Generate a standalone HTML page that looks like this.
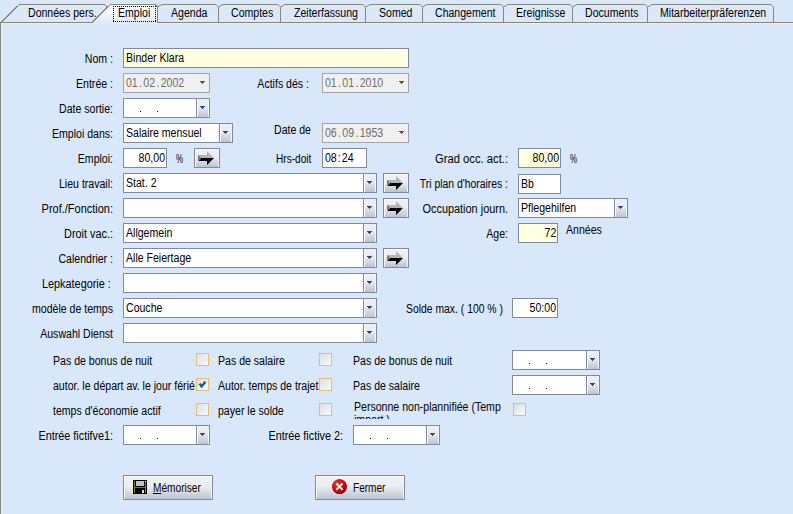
<!DOCTYPE html>
<html><head><meta charset="utf-8"><style>
html,body{margin:0;padding:0;}
body{width:793px;height:514px;overflow:hidden;position:relative;background:#D8E7FA;}
.abs{position:absolute;}
.t{font-family:"Liberation Sans",sans-serif;font-size:12px;line-height:13px;color:#000;white-space:nowrap;transform:scaleX(0.88);transform-origin:0 0;}
.tr{text-align:right;transform-origin:100% 0;}
.box{box-sizing:border-box;border:1px solid #7E8B9C;overflow:hidden;}
.dis{color:#6D6D6D;}
.sp{padding:0 1.5px;}
.sp2{padding:0 1.2px;}
.cbtn{position:absolute;right:0;top:0;bottom:0;width:12px;border-left:1px solid #7E8B9C;background:linear-gradient(#EFF0F5 0%,#E9EBF0 40%,#BEC4D0 100%);box-shadow:inset 1px 0 0 #fafbfd, inset -1px 0 0 #f5f6f9;}
.dot{width:1px;height:1px;background:#3A003A;}
.btn{box-sizing:border-box;border:1px solid #7E8B9C;background:linear-gradient(#F1F1F5 0%,#ECEDF2 45%,#BCC3CF 100%);box-shadow:inset 1px 1px 0 #fbfbfd, inset -1px 0 0 #f3f4f7;}
.chk{box-sizing:border-box;width:13px;height:13px;border:1px solid #E3C070;background:linear-gradient(135deg,#DCDFE5,#F8F9FA);}
</style></head>
<body>
<svg class="abs" style="left:0;top:0" width="793" height="24" viewBox="0 0 793 24"><defs><linearGradient id="selg" x1="0" y1="0" x2="0" y2="1"><stop offset="0" stop-color="#ffffff"/><stop offset="1" stop-color="#dfeaf9"/></linearGradient></defs><path d="M157.5 22 V6.5 L160.5 4.5 H215.5 L218.5 6.5 V22 Z" fill="#DBE8F9"/><path d="M218.5 22 V6.5 L221.5 4.5 H277.5 L280.5 6.5 V22 Z" fill="#DBE8F9"/><path d="M280.5 22 V6.5 L283.5 4.5 H362.5 L365.5 6.5 V22 Z" fill="#DBE8F9"/><path d="M365.5 22 V6.5 L368.5 4.5 H419.5 L422.5 6.5 V22 Z" fill="#DBE8F9"/><path d="M422.5 22 V6.5 L425.5 4.5 H500.5 L503.5 6.5 V22 Z" fill="#DBE8F9"/><path d="M503.5 22 V6.5 L506.5 4.5 H569.5 L572.5 6.5 V22 Z" fill="#DBE8F9"/><path d="M572.5 22 V6.5 L575.5 4.5 H644.5 L647.5 6.5 V22 Z" fill="#DBE8F9"/><path d="M647.5 22 V6.5 L650.5 4.5 H770.5 L773.5 6.5 V22 Z" fill="#DBE8F9"/><path d="M1.5 22 L16 7.5 L20 4.5 H104.5 L107 7 L92 22 Z" fill="#DBE8F9"/><path d="M0 22.5 H92 M157 22.5 H793" stroke="#898577"/><path d="M157.5 22 V7 L162 4.5 H216 L218.5 7 V22" fill="none" stroke="#898577"/><path d="M218.5 22 V7 L223 4.5 H278 L280.5 7 V22" fill="none" stroke="#898577"/><path d="M280.5 22 V7 L285 4.5 H363 L365.5 7 V22" fill="none" stroke="#898577"/><path d="M365.5 22 V7 L370 4.5 H420 L422.5 7 V22" fill="none" stroke="#898577"/><path d="M422.5 22 V7 L427 4.5 H501 L503.5 7 V22" fill="none" stroke="#898577"/><path d="M503.5 22 V7 L508 4.5 H570 L572.5 7 V22" fill="none" stroke="#898577"/><path d="M572.5 22 V7 L577 4.5 H645 L647.5 7 V22" fill="none" stroke="#898577"/><path d="M647.5 22 V7 L652 4.5 H771 L773.5 7 V22" fill="none" stroke="#898577"/><path d="M1 22.5 L15.5 8 L19.5 4.5 H104.5 L107.5 7" fill="none" stroke="#898577" shape-rendering="crispEdges"/><path d="M92 23 L107 8 L110 4.5 H154.5 L157 7 V23 Z" fill="url(#selg)"/><path d="M92 22.5 L107 7.5 L110.5 4.5 H155 L157.5 7 V22" fill="none" stroke="#898577" shape-rendering="crispEdges"/><path d="M113 6h1v1h-1z M113 21h1v1h-1z M115 6h1v1h-1z M115 21h1v1h-1z M117 6h1v1h-1z M117 21h1v1h-1z M119 6h1v1h-1z M119 21h1v1h-1z M121 6h1v1h-1z M121 21h1v1h-1z M123 6h1v1h-1z M123 21h1v1h-1z M125 6h1v1h-1z M125 21h1v1h-1z M127 6h1v1h-1z M127 21h1v1h-1z M129 6h1v1h-1z M129 21h1v1h-1z M131 6h1v1h-1z M131 21h1v1h-1z M133 6h1v1h-1z M133 21h1v1h-1z M135 6h1v1h-1z M135 21h1v1h-1z M137 6h1v1h-1z M137 21h1v1h-1z M139 6h1v1h-1z M139 21h1v1h-1z M141 6h1v1h-1z M141 21h1v1h-1z M143 6h1v1h-1z M143 21h1v1h-1z M145 6h1v1h-1z M145 21h1v1h-1z M147 6h1v1h-1z M147 21h1v1h-1z M149 6h1v1h-1z M149 21h1v1h-1z M151 6h1v1h-1z M151 21h1v1h-1z M153 6h1v1h-1z M153 21h1v1h-1z M155 6h1v1h-1z M155 21h1v1h-1z M113 8h1v1h-1z M155 8h1v1h-1z M113 10h1v1h-1z M155 10h1v1h-1z M113 12h1v1h-1z M155 12h1v1h-1z M113 14h1v1h-1z M155 14h1v1h-1z M113 16h1v1h-1z M155 16h1v1h-1z M113 18h1v1h-1z M155 18h1v1h-1z M113 20h1v1h-1z M155 20h1v1h-1z" fill="#000"/></svg>
<div class="abs" style="left:0;top:22px;width:1px;height:492px;background:#898577"></div>
<div class="abs" style="left:1px;top:23px;width:1px;height:491px;background:#E8F1FC"></div>
<div class="abs" style="left:1px;top:23px;width:792px;height:1px;background:#E4EEFB"></div>
<div class="t abs" style="left:28px;top:7px;">Données pers.</div>
<div class="t abs" style="left:118px;top:7px;">Emploi</div>
<div class="t abs" style="left:171px;top:7px;">Agenda</div>
<div class="t abs" style="left:231px;top:7px;">Comptes</div>
<div class="t abs" style="left:294px;top:7px;">Zeiterfassung</div>
<div class="t abs" style="left:379px;top:7px;">Somed</div>
<div class="t abs" style="left:435px;top:7px;">Changement</div>
<div class="t abs" style="left:516px;top:7px;">Ereignisse</div>
<div class="t abs" style="left:585px;top:7px;">Documents</div>
<div class="t abs" style="left:660px;top:7px;">Mitarbeiterpräferenzen</div>
<div class="t tr abs" style="left:0;width:113px;top:53px;">Nom :</div>
<div class="abs box" style="left:123px;top:48px;width:286px;height:20px;background:#FFFFE1;border-color:#7E8B9C"><div class="t abs" style="left:2px;top:3px">Binder Klara</div></div>
<div class="t tr abs" style="left:0;width:113px;top:78px;">Entrée :</div>
<div class="abs box" style="left:123px;top:73px;width:87px;height:20px;background:#F0F0F0;border-color:#A5A5A5"><div class="t abs dis" style="left:2px;top:3px">01<span class=sp>.</span>02<span class=sp>.</span>2002</div><svg class="abs" style="right:4px;top:7px" width="5" height="3" viewBox="0 0 5 3"><path d="M0 0h5v1h-1v1h-1v1h-1v-1h-1v-1h-1z" fill="#555555"/></svg></div>
<div class="t tr abs" style="left:0;width:309px;top:78px;">Actifs dés :</div>
<div class="abs box" style="left:322px;top:73px;width:87px;height:20px;background:#F0F0F0;border-color:#A5A5A5"><div class="t abs dis" style="left:2px;top:3px">01<span class=sp>.</span>01<span class=sp>.</span>2010</div><svg class="abs" style="right:4px;top:7px" width="5" height="3" viewBox="0 0 5 3"><path d="M0 0h5v1h-1v1h-1v1h-1v-1h-1v-1h-1z" fill="#555555"/></svg></div>
<div class="t tr abs" style="left:0;width:113px;top:103px;">Date sortie:</div>
<div class="abs box" style="left:123px;top:98px;width:87px;height:20px;background:#fff;border-color:#7E8B9C"><div class="abs dot" style="left:16px;top:12px"></div><div class="abs dot" style="left:33px;top:12px"></div><div class="cbtn"><svg class="abs" style="left:3px;top:7px" width="5" height="3" viewBox="0 0 5 3"><path d="M0 0h5v1h-1v1h-1v1h-1v-1h-1v-1h-1z" fill="#2C4A74"/></svg></div></div>
<div class="t tr abs" style="left:0;width:113px;top:128px;">Emploi dans:</div>
<div class="abs box" style="left:123px;top:123px;width:110px;height:20px;background:#fff;border-color:#7E8B9C"><div class="t abs" style="left:2px;top:3px">Salaire mensuel</div><div class="cbtn"><svg class="abs" style="left:3px;top:7px" width="5" height="3" viewBox="0 0 5 3"><path d="M0 0h5v1h-1v1h-1v1h-1v-1h-1v-1h-1z" fill="#2C4A74"/></svg></div></div>
<div class="t abs" style="left:274px;top:124px;">Date de</div>
<div class="abs box" style="left:322px;top:123px;width:87px;height:20px;background:#F0F0F0;border-color:#A5A5A5"><div class="t abs dis" style="left:2px;top:3px">06<span class=sp>.</span>09<span class=sp>.</span>1953</div><svg class="abs" style="right:4px;top:7px" width="5" height="3" viewBox="0 0 5 3"><path d="M0 0h5v1h-1v1h-1v1h-1v-1h-1v-1h-1z" fill="#555555"/></svg></div>
<div class="t tr abs" style="left:0;width:113px;top:153px;">Emploi:</div>
<div class="abs box" style="left:123px;top:148px;width:44px;height:20px;background:#fff;border-color:#7E8B9C"><div class="t tr abs" style="right:1px;top:3px">80,00</div></div>
<div class="t abs" style="left:176px;top:153px;transform:scaleX(0.66);">%</div>
<div class="abs btn" style="left:194px;top:148px;width:26px;height:20px"><svg class="abs" style="left:0;top:0" width="24" height="18" viewBox="0 0 24 18"><path d="M3 6 H12 V2 L19 9 H3 Z" fill="#B4B4B4"/><path d="M3 9 H19 L12 16 V12 H4 Z" fill="#000"/><path d="M3 6 L6 8.5 V10 L3 12 Z" fill="#7a7a7a"/></svg></div>
<div class="t abs" style="left:276px;top:153px;transform:scaleX(0.84);">Hrs-doit</div>
<div class="abs box" style="left:322px;top:148px;width:45px;height:20px;background:#fff;border-color:#7E8B9C"><div class="t abs" style="left:2px;top:3px">08<span class=sp2>:</span>24</div></div>
<div class="t tr abs" style="left:0;width:508px;top:153px;transform:scaleX(0.935);">Grad occ. act.:</div>
<div class="abs box" style="left:518px;top:148px;width:43px;height:20px;background:#FFFFE1;border-color:#7E8B9C"><div class="t tr abs" style="right:1px;top:3px">80,00</div></div>
<div class="t abs" style="left:570px;top:153px;transform:scaleX(0.66);">%</div>
<div class="t tr abs" style="left:0;width:113px;top:178px;">Lieu travail:</div>
<div class="abs box" style="left:123px;top:173px;width:254px;height:20px;background:#fff;border-color:#7E8B9C"><div class="t abs" style="left:2px;top:3px">Stat. 2</div><div class="cbtn"><svg class="abs" style="left:3px;top:7px" width="5" height="3" viewBox="0 0 5 3"><path d="M0 0h5v1h-1v1h-1v1h-1v-1h-1v-1h-1z" fill="#2C4A74"/></svg></div></div>
<div class="abs btn" style="left:383px;top:173px;width:26px;height:20px"><svg class="abs" style="left:0;top:0" width="24" height="18" viewBox="0 0 24 18"><path d="M3 6 H12 V2 L19 9 H3 Z" fill="#B4B4B4"/><path d="M3 9 H19 L12 16 V12 H4 Z" fill="#000"/><path d="M3 6 L6 8.5 V10 L3 12 Z" fill="#7a7a7a"/></svg></div>
<div class="t tr abs" style="left:0;width:508px;top:178px;transform:scaleX(0.866);">Tri plan d'horaires :</div>
<div class="abs box" style="left:518px;top:174px;width:43px;height:20px;background:#fff;border-color:#7E8B9C"><div class="t abs" style="left:2px;top:3px">Bb</div></div>
<div class="t tr abs" style="left:0;width:113px;top:203px;transform:scaleX(0.915);">Prof./Fonction:</div>
<div class="abs box" style="left:123px;top:198px;width:254px;height:20px;background:#fff;border-color:#7E8B9C"><div class="cbtn"><svg class="abs" style="left:3px;top:7px" width="5" height="3" viewBox="0 0 5 3"><path d="M0 0h5v1h-1v1h-1v1h-1v-1h-1v-1h-1z" fill="#2C4A74"/></svg></div></div>
<div class="abs btn" style="left:383px;top:198px;width:26px;height:20px"><svg class="abs" style="left:0;top:0" width="24" height="18" viewBox="0 0 24 18"><path d="M3 6 H12 V2 L19 9 H3 Z" fill="#B4B4B4"/><path d="M3 9 H19 L12 16 V12 H4 Z" fill="#000"/><path d="M3 6 L6 8.5 V10 L3 12 Z" fill="#7a7a7a"/></svg></div>
<div class="t tr abs" style="left:0;width:508px;top:203px;transform:scaleX(0.909);">Occupation journ.</div>
<div class="abs box" style="left:518px;top:198px;width:110px;height:20px;background:#fff;border-color:#7E8B9C"><div class="t abs" style="left:2px;top:3px">Pflegehilfen</div><div class="cbtn"><svg class="abs" style="left:3px;top:7px" width="5" height="3" viewBox="0 0 5 3"><path d="M0 0h5v1h-1v1h-1v1h-1v-1h-1v-1h-1z" fill="#2C4A74"/></svg></div></div>
<div class="t tr abs" style="left:0;width:113px;top:228px;transform:scaleX(0.905);">Droit vac.:</div>
<div class="abs box" style="left:123px;top:223px;width:254px;height:20px;background:#fff;border-color:#7E8B9C"><div class="t abs" style="left:2px;top:3px">Allgemein</div><div class="cbtn"><svg class="abs" style="left:3px;top:7px" width="5" height="3" viewBox="0 0 5 3"><path d="M0 0h5v1h-1v1h-1v1h-1v-1h-1v-1h-1z" fill="#2C4A74"/></svg></div></div>
<div class="t tr abs" style="left:0;width:508px;top:228px;">Age:</div>
<div class="abs box" style="left:518px;top:223px;width:40px;height:20px;background:#FFFFE1;border-color:#7E8B9C"><div class="t tr abs" style="right:1px;top:3px">72</div></div>
<div class="t abs" style="left:566px;top:224px;">Années</div>
<div class="t tr abs" style="left:0;width:113px;top:253px;">Calendrier :</div>
<div class="abs box" style="left:123px;top:248px;width:254px;height:20px;background:#fff;border-color:#7E8B9C"><div class="t abs" style="left:2px;top:3px">Alle Feiertage</div><div class="cbtn"><svg class="abs" style="left:3px;top:7px" width="5" height="3" viewBox="0 0 5 3"><path d="M0 0h5v1h-1v1h-1v1h-1v-1h-1v-1h-1z" fill="#2C4A74"/></svg></div></div>
<div class="abs btn" style="left:383px;top:248px;width:26px;height:20px"><svg class="abs" style="left:0;top:0" width="24" height="18" viewBox="0 0 24 18"><path d="M3 6 H12 V2 L19 9 H3 Z" fill="#B4B4B4"/><path d="M3 9 H19 L12 16 V12 H4 Z" fill="#000"/><path d="M3 6 L6 8.5 V10 L3 12 Z" fill="#7a7a7a"/></svg></div>
<div class="t abs" style="left:42px;top:278px;transform:scaleX(0.905);">Lepkategorie :</div>
<div class="abs box" style="left:123px;top:273px;width:254px;height:20px;background:#fff;border-color:#7E8B9C"><div class="cbtn"><svg class="abs" style="left:3px;top:7px" width="5" height="3" viewBox="0 0 5 3"><path d="M0 0h5v1h-1v1h-1v1h-1v-1h-1v-1h-1z" fill="#2C4A74"/></svg></div></div>
<div class="t tr abs" style="left:0;width:113px;top:303px;">modèle de temps</div>
<div class="abs box" style="left:123px;top:298px;width:254px;height:20px;background:#fff;border-color:#7E8B9C"><div class="t abs" style="left:2px;top:3px">Couche</div><div class="cbtn"><svg class="abs" style="left:3px;top:7px" width="5" height="3" viewBox="0 0 5 3"><path d="M0 0h5v1h-1v1h-1v1h-1v-1h-1v-1h-1z" fill="#2C4A74"/></svg></div></div>
<div class="t abs" style="left:406px;top:303px;transform:scaleX(0.865);">Solde max. ( 100 % )</div>
<div class="abs box" style="left:512px;top:298px;width:46px;height:20px;background:#fff;border-color:#7E8B9C"><div class="t tr abs" style="right:1px;top:3px">50:00</div></div>
<div class="t tr abs" style="left:0;width:113px;top:328px;">Auswahl Dienst</div>
<div class="abs box" style="left:123px;top:323px;width:254px;height:20px;background:#fff;border-color:#7E8B9C"><div class="cbtn"><svg class="abs" style="left:3px;top:7px" width="5" height="3" viewBox="0 0 5 3"><path d="M0 0h5v1h-1v1h-1v1h-1v-1h-1v-1h-1z" fill="#2C4A74"/></svg></div></div>
<div class="t abs" style="left:53px;top:355px;">Pas de bonus de nuit</div>
<div class="abs chk" style="left:196px;top:353px"></div>
<div class="t abs" style="left:218px;top:355px;">Pas de salaire</div>
<div class="abs chk" style="left:319px;top:353px"></div>
<div class="t abs" style="left:353px;top:355px;">Pas de bonus de nuit</div>
<div class="abs box" style="left:512px;top:350px;width:88px;height:20px;background:#fff;border-color:#7E8B9C"><div class="abs dot" style="left:16px;top:12px"></div><div class="abs dot" style="left:33px;top:12px"></div><div class="cbtn"><svg class="abs" style="left:3px;top:7px" width="5" height="3" viewBox="0 0 5 3"><path d="M0 0h5v1h-1v1h-1v1h-1v-1h-1v-1h-1z" fill="#2C4A74"/></svg></div></div>
<div class="t abs" style="left:53px;top:380px;">autor. le départ av. le jour férié</div>
<div class="abs chk" style="left:196px;top:378px"><svg class="abs" style="left:0;top:0" width="11" height="11" viewBox="0 0 11 11"><path d="M2.6 4.6 L4.6 7.4 L8.4 2.8" fill="none" stroke="#1256A6" stroke-width="2.3"/></svg></div>
<div class="t abs" style="left:218px;top:380px;">Autor. temps de trajet</div>
<div class="abs chk" style="left:319px;top:378px"></div>
<div class="t abs" style="left:353px;top:380px;">Pas de salaire</div>
<div class="abs box" style="left:512px;top:375px;width:88px;height:20px;background:#fff;border-color:#7E8B9C"><div class="abs dot" style="left:16px;top:12px"></div><div class="abs dot" style="left:33px;top:12px"></div><div class="cbtn"><svg class="abs" style="left:3px;top:7px" width="5" height="3" viewBox="0 0 5 3"><path d="M0 0h5v1h-1v1h-1v1h-1v-1h-1v-1h-1z" fill="#2C4A74"/></svg></div></div>
<div class="t abs" style="left:53px;top:405px;">temps d'économie actif</div>
<div class="abs chk" style="left:196px;top:403px"></div>
<div class="t abs" style="left:218px;top:405px;">payer le solde</div>
<div class="abs chk" style="left:319px;top:403px"></div>
<div class="abs" style="left:354px;top:400px;width:156px;height:19px;overflow:hidden"><div class="t abs" style="left:0;top:1px">Personne non-plannifiée (Temp<br>import.)</div></div>
<div class="abs chk" style="left:513px;top:403px"></div>
<div class="t tr abs" style="left:0;width:113px;top:430px;transform:scaleX(0.9);">Entrée fictifve1:</div>
<div class="abs box" style="left:123px;top:425px;width:87px;height:20px;background:#fff;border-color:#7E8B9C"><div class="abs dot" style="left:16px;top:12px"></div><div class="abs dot" style="left:33px;top:12px"></div><div class="cbtn"><svg class="abs" style="left:3px;top:7px" width="5" height="3" viewBox="0 0 5 3"><path d="M0 0h5v1h-1v1h-1v1h-1v-1h-1v-1h-1z" fill="#2C4A74"/></svg></div></div>
<div class="t tr abs" style="left:0;width:343px;top:430px;transform:scaleX(0.9);">Entrée fictive 2:</div>
<div class="abs box" style="left:353px;top:425px;width:87px;height:20px;background:#fff;border-color:#7E8B9C"><div class="abs dot" style="left:16px;top:12px"></div><div class="abs dot" style="left:33px;top:12px"></div><div class="cbtn"><svg class="abs" style="left:3px;top:7px" width="5" height="3" viewBox="0 0 5 3"><path d="M0 0h5v1h-1v1h-1v1h-1v-1h-1v-1h-1z" fill="#2C4A74"/></svg></div></div>
<div class="abs btn" style="left:123px;top:475px;width:90px;height:25px"><svg class="abs" style="left:9px;top:4px" width="14" height="14" viewBox="0 0 14 14"><rect x="0" y="0" width="14" height="14" fill="#000"/><rect x="1" y="1" width="1" height="12" fill="#808000"/><rect x="12" y="2" width="1" height="11" fill="#808000"/><rect x="1" y="7" width="12" height="1" fill="#808000"/><rect x="3" y="1" width="8" height="5" fill="#C0C0C0"/><rect x="9" y="10" width="2" height="3" fill="#E0E0E0"/><rect x="12" y="1" width="1" height="1" fill="#fff"/></svg><div class="t abs" style="left:29px;top:6px;transform:scaleX(0.845)"><u>M</u>émoriser</div></div>
<div class="abs btn" style="left:315px;top:475px;width:90px;height:25px"><svg class="abs" style="left:16px;top:3px" width="16" height="16" viewBox="0 0 16 16"><defs><radialGradient id="rg" cx="0.4" cy="0.35" r="0.7"><stop offset="0" stop-color="#F04040"/><stop offset="0.55" stop-color="#DD0A0A"/><stop offset="1" stop-color="#A00000"/></radialGradient></defs><circle cx="7.6" cy="7.7" r="7.4" fill="#8A0000"/><circle cx="7.3" cy="7.4" r="6.9" fill="url(#rg)"/><path d="M4.2 4.4 L10.6 10.8 M10.6 4.4 L4.2 10.8" stroke="#fff" stroke-width="1.8"/></svg><div class="t abs" style="left:37px;top:6px;transform:scaleX(0.836)">Fermer</div></div>
</body></html>
